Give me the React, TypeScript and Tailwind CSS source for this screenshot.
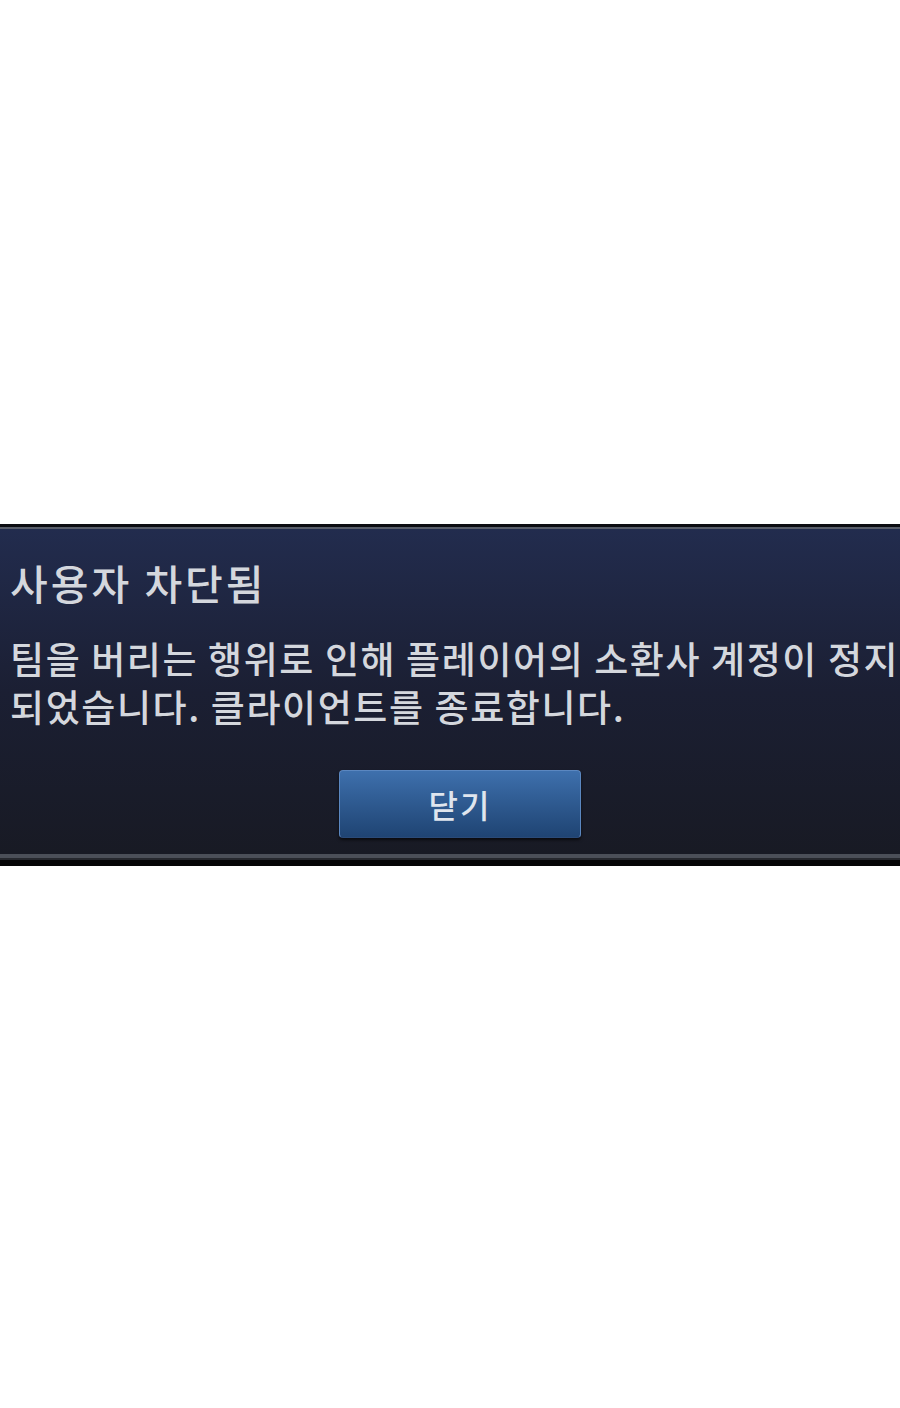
export default function App() {
  return (
    <div className="min-h-screen bg-white flex flex-col">
      <div className="h-[524px]" />
      <div className="w-full flex flex-col">
        {/* top edge: black then grey */}
        <div className="h-[3px] bg-[#0c0d12]" />
        <div className="h-[2px] bg-[#5a5f6b]" />
        <div
          className="flex flex-col bg-gradient-to-b from-[#222c4e] via-[#1b1f33] to-[#181a24] pl-[10px] pt-[29px] pb-[16px] text-[#d4d7dd]"
          style={{ fontFamily: '"Noto Sans CJK KR", "Noto Sans", sans-serif' }}
        >
          <h1 className="text-[41px] leading-[48px] font-medium tracking-[3px] whitespace-nowrap">사용자 차단됨</h1>
          <div className="mt-[28px] flex flex-col text-[37px] leading-[48px] font-medium tracking-[1.6px] whitespace-nowrap">
            <p>팀을 버리는 행위로 인해 플레이어의 소환사 계정이 정지</p>
            <p>되었습니다. 클라이언트를 종료합니다.</p>
          </div>
          <div className="flex justify-center mt-[40px] pl-[10px]">
            <button className="w-[242px] h-[68px] rounded-[4px] border border-[#5b87c0] border-b-[#2a4a78] bg-gradient-to-b from-[#3e70ad] to-[#1f4473] text-[#dfe5ee] text-[32px] font-medium tracking-[2px] shadow-[0_2px_3px_rgba(0,0,0,0.6)]">
              닫기
            </button>
          </div>
        </div>
        {/* bottom edge: grey band then black */}
        <div className="h-[4px] bg-[#4b4f58]" />
        <div className="h-[2px] bg-[#26282e]" />
        <div className="h-[6px] bg-[#050506]" />
      </div>
    </div>
  );
}
